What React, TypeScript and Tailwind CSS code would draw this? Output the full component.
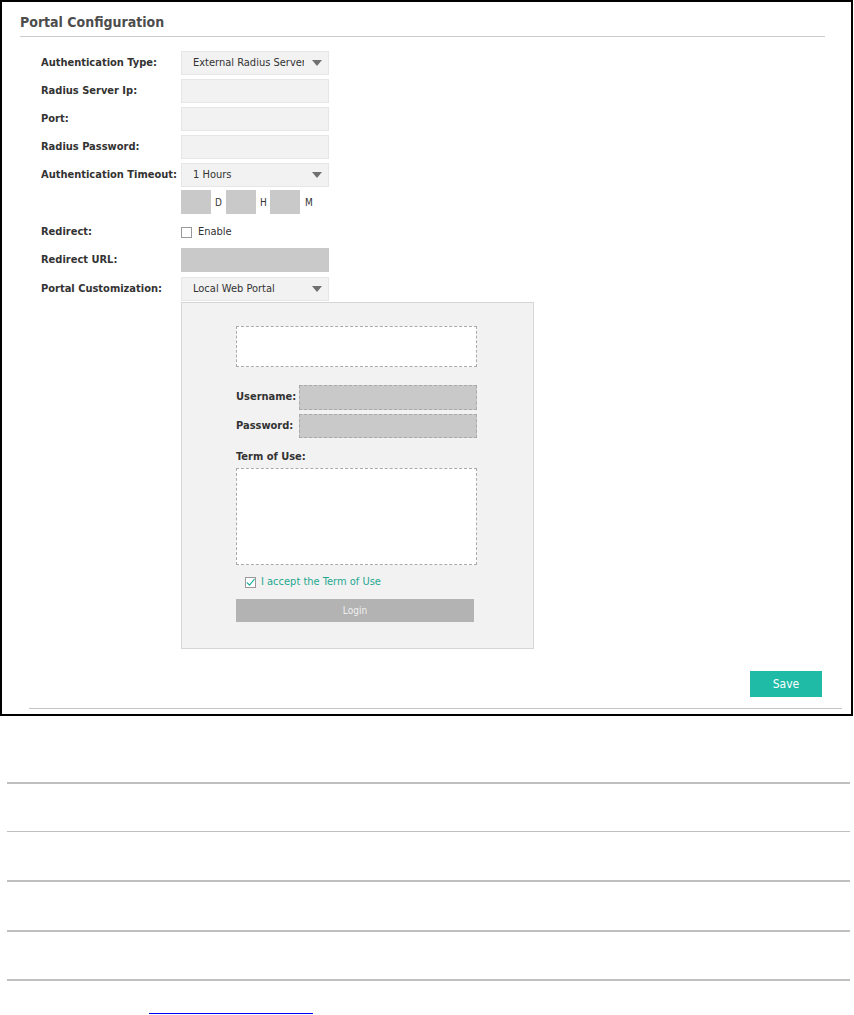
import React from 'react';

const font = { fontFamily: '"DejaVu Sans Condensed", "DejaVu Sans", sans-serif', fontStretch: 'condensed' as const };

// ================= Small pieces =================
const Caret = () => (
  <svg width="10" height="6" viewBox="0 0 10 6" className="shrink-0">
    <path d="M0 0 L10 0 L5 6 Z" fill="#707070" />
  </svg>
);

const SelectBox: React.FC<{ value: string }> = ({ value }) => (
  <div className="w-[148px] h-[24px] bg-[#f2f2f2] border border-[#e6e6e6] flex items-center pl-[11px] pr-[6px] gap-[8px]">
    <span className="flex-1 overflow-hidden whitespace-nowrap text-[11px] text-[#333]">{value}</span>
    <Caret />
  </div>
);

const TextBox: React.FC<{ dark?: boolean }> = ({ dark }) => (
  <div className={`w-[148px] h-[24px] border ${dark ? 'bg-[#c9c9c9] border-[#c9c9c9]' : 'bg-[#f2f2f2] border-[#e6e6e6]'}`} />
);

const Row: React.FC<{ label: string; children?: React.ReactNode; className?: string }> = ({ label, children, className }) => (
  <div className={`flex items-center ${className || ''}`}>
    <div className="w-[140px] text-[11px] font-bold text-[#333] whitespace-nowrap">{label}</div>
    {children}
  </div>
);

// ================= Main =================
export default function App() {
  return (
    <div className="w-[854px] h-[1015px] bg-white overflow-hidden" style={font}>
      {/* ================= Framed panel ================= */}
      <div className="w-[853px] h-[716px] border-2 border-black flex flex-col">
        <div className="ml-[18px] mr-[26px] mt-[12px] pb-[6px] border-b border-[#cccccc]">
          <h2 className="text-[14px] font-bold text-[#4d4d4d] leading-[16px]">Portal Configuration</h2>
        </div>

        <div className="pl-[39px] mt-[14px] flex flex-col">
          <Row label="Authentication Type:"><SelectBox value="External Radius Server" /></Row>
          <Row label="Radius Server Ip:" className="mt-[4px]"><TextBox /></Row>
          <Row label="Port:" className="mt-[4px]"><TextBox /></Row>
          <Row label="Radius Password:" className="mt-[4px]"><TextBox /></Row>
          <Row label="Authentication Timeout:" className="mt-[4px]"><SelectBox value="1 Hours" /></Row>

          <div className="flex items-center mt-[3px] pl-[140px] text-[10px] text-[#333]">
            <div className="w-[30px] h-[24px] bg-[#c9c9c9]" />
            <span className="w-[15px] pl-[4px]">D</span>
            <div className="w-[30px] h-[24px] bg-[#c9c9c9]" />
            <span className="w-[14px] pl-[4px]">H</span>
            <div className="w-[30px] h-[24px] bg-[#c9c9c9]" />
            <span className="pl-[5px]">M</span>
          </div>

          <Row label="Redirect:" className="mt-[10px] h-[16px]">
            <div className="flex items-center gap-[6px]">
              <div className="w-[11px] h-[11px] border border-[#999] bg-white" />
              <span className="text-[11px] text-[#333]">Enable</span>
            </div>
          </Row>
          <Row label="Redirect URL:" className="mt-[8px]"><TextBox dark /></Row>
          <Row label="Portal Customization:" className="mt-[5px]"><SelectBox value="Local Web Portal" /></Row>

          {/* ================= Portal preview ================= */}
          <div className="ml-[140px] mt-[1px] w-[353px] h-[347px] bg-[#f2f2f2] border border-[#d6d6d6] pl-[54px] pt-[23px] flex flex-col">
            <div className="w-[241px] h-[41px] bg-white border border-dashed border-[#aaa]" />

            <div className="flex items-center mt-[18px]">
              <span className="w-[63px] text-[11px] font-bold text-[#333]">Username:</span>
              <div className="w-[178px] h-[25px] bg-[#c9c9c9] border border-dashed border-[#aaa]" />
            </div>
            <div className="flex items-center mt-[4px]">
              <span className="w-[63px] text-[11px] font-bold text-[#333]">Password:</span>
              <div className="w-[178px] h-[24px] bg-[#c9c9c9] border border-dashed border-[#aaa]" />
            </div>

            <span className="mt-[12px] text-[11px] font-bold text-[#333] leading-[14px]">Term of Use:</span>
            <div className="mt-[4px] w-[241px] h-[97px] bg-white border border-dashed border-[#aaa]" />

            <div className="flex items-center mt-[9px] ml-[9px] gap-[5px]">
              <div className="w-[11px] h-[11px] border border-[#999] bg-white flex items-center justify-center">
                <svg width="10" height="9" viewBox="0 0 10 9">
                  <path d="M1 4.5 L4 7.5 L9.5 0.5" fill="none" stroke="#1fb5a0" strokeWidth="1.3" />
                </svg>
              </div>
              <span className="text-[11px] text-[#1fa890]">I accept the Term of Use</span>
            </div>

            <div className="mt-[8px] w-[238px] h-[23px] bg-[#b3b3b3] flex items-center justify-center text-[10px] text-[#f0f0f0]">
              Login
            </div>
          </div>
        </div>

        <div className="flex justify-end mr-[29px] mt-[22px]">
          <button className="w-[72px] h-[26px] bg-[#20bba6] text-white text-[12px]">Save</button>
        </div>
        <div className="ml-[27px] mr-[9px] mt-[11px] h-px bg-[#c4c4c4]" />
      </div>

      {/* ================= Lines below ================= */}
      <div className="flex flex-col pl-[7px] pr-[4px]">
        <div className="mt-[66px] h-[2px] bg-[#bfbfbf]" />
        <div className="mt-[47px] h-px bg-[#bfbfbf]" />
        <div className="mt-[48px] h-[2px] bg-[#bfbfbf]" />
        <div className="mt-[48px] h-[2px] bg-[#bfbfbf]" />
        <div className="mt-[47px] h-[2px] bg-[#bfbfbf]" />
        <div className="mt-[32px] ml-[142px] w-[164px] h-px bg-[#0000ff]" />
      </div>
    </div>
  );
}
